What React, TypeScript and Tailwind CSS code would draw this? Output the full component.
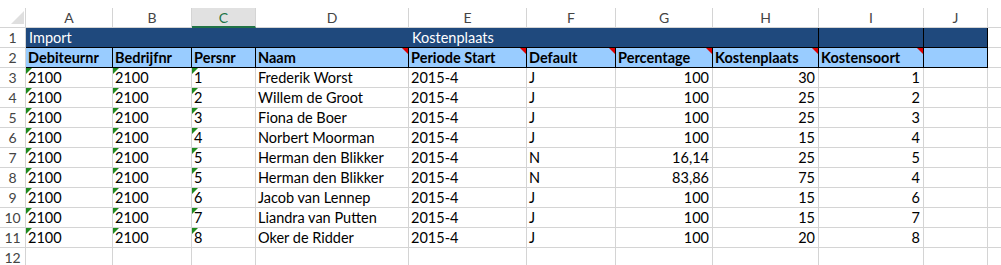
import React from "react";

// column widths in px, gridline included (right edge)
const cols = [
  { key: "A", w: 87 },
  { key: "B", w: 79 },
  { key: "C", w: 64 },
  { key: "D", w: 153 },
  { key: "E", w: 118 },
  { key: "F", w: 89 },
  { key: "G", w: 97 },
  { key: "H", w: 106 },
  { key: "I", w: 105 },
  { key: "J", w: 64 },
];

const headers = [
  "Debiteurnr",
  "Bedrijfnr",
  "Persnr",
  "Naam",
  "Periode Start",
  "Default",
  "Percentage",
  "Kostenplaats",
  "Kostensoort",
  "",
];

const data: string[][] = [
  ["2100", "2100", "1", "Frederik Worst", "2015-4", "J", "100", "30", "1"],
  ["2100", "2100", "2", "Willem de Groot", "2015-4", "J", "100", "25", "2"],
  ["2100", "2100", "3", "Fiona de Boer", "2015-4", "J", "100", "25", "3"],
  ["2100", "2100", "4", "Norbert Moorman", "2015-4", "J", "100", "15", "4"],
  ["2100", "2100", "5", "Herman den Blikker", "2015-4", "N", "16,14", "25", "5"],
  ["2100", "2100", "5", "Herman den Blikker", "2015-4", "N", "83,86", "75", "4"],
  ["2100", "2100", "6", "Jacob van Lennep", "2015-4", "J", "100", "15", "6"],
  ["2100", "2100", "7", "Liandra van Putten", "2015-4", "J", "100", "15", "7"],
  ["2100", "2100", "8", "Oker de Ridder", "2015-4", "J", "100", "20", "8"],
];

const rightAligned = [6, 7, 8];
const greenFlag = [0, 1, 2];
const redFlag = [3, 4, 5, 6, 7, 8];

function RowNum({ n }: { n: number | string }) {
  return (
    <div className="w-[26px] shrink-0 h-full border-r border-b border-[#d4d4d4] flex items-center justify-center text-[#444] text-[14px]">
      {n}
    </div>
  );
}

export default function App() {
  return (
    <div
      className="w-[1001px] h-[265px] overflow-hidden bg-white text-black"
      style={{ fontFamily: "Lato, 'Liberation Sans', sans-serif" }}
    >
      <div className="h-[8px]" />

      {/* column letters */}
      <div className="flex h-[20px]">
        <div className="w-[26px] shrink-0 h-full border-r border-b border-[#d4d4d4] relative">
          <svg className="absolute left-[11px] top-[3px]" width="13" height="13" viewBox="0 0 13 13">
            <polygon points="13,0 13,13 0,13" fill="#dfdfdf" />
          </svg>
        </div>
        {cols.map((c) =>
          c.key === "C" ? (
            <div
              key={c.key}
              style={{ width: c.w }}
              className="shrink-0 h-full bg-[#e1e1e1] border-r border-[#d4d4d4] border-b-2 border-b-[#217346] flex items-center justify-center text-[#217346] text-[14px]"
            >
              {c.key}
            </div>
          ) : (
            <div
              key={c.key}
              style={{ width: c.w }}
              className="shrink-0 h-full border-r border-b border-[#d4d4d4] flex items-center justify-center text-[#444] text-[14px]"
            >
              {c.key}
            </div>
          )
        )}
        <div className="flex-1 h-full border-b border-[#d4d4d4]" />
      </div>

      {/* row 1 - group titles */}
      <div className="flex h-[20px]">
        <RowNum n={1} />
        <div className="w-[383px] shrink-0 h-full bg-[#1f497d] border-b border-black text-white text-[14.5px] leading-[19px] pl-[3px]">
          Import
        </div>
        <div className="w-[410px] shrink-0 h-full bg-[#1f497d] border-r border-b border-black text-white text-[14.5px] leading-[19px] pl-[3px]">
          Kostenplaats
        </div>
        <div className="w-[105px] shrink-0 h-full bg-[#1f497d] border-r border-b border-black" />
        <div className="w-[64px] shrink-0 h-full bg-[#1f497d] border-r border-b border-black" />
        <div className="flex-1 h-full border-b border-[#d4d4d4]" />
      </div>

      {/* row 2 - column headers */}
      <div className="flex h-[20px]">
        <RowNum n={2} />
        {cols.map((c, i) => (
          <div
            key={c.key}
            style={{ width: c.w }}
            className="shrink-0 h-full bg-[#99ccff] border-r border-b border-black relative font-bold text-[14.5px] leading-[19px] pl-[2px] whitespace-nowrap overflow-hidden"
          >
            {headers[i]}
            {redFlag.includes(i) && (
              <svg className="absolute right-0 top-0" width="6" height="6" viewBox="0 0 6 6">
                <polygon points="0,0 6,0 6,6" fill="#e00000" />
              </svg>
            )}
          </div>
        ))}
        <div className="flex-1 h-full border-b border-[#d4d4d4]" />
      </div>

      {/* data rows */}
      {data.map((row, r) => (
        <div key={r} className="flex h-[20px]">
          <RowNum n={r + 3} />
          {cols.map((c, i) => (
            <div
              key={c.key}
              style={{ width: c.w }}
              className={
                "shrink-0 h-full border-r border-b border-[#d4d4d4] relative text-[14.5px] leading-[19px] whitespace-nowrap " +
                (rightAligned.includes(i) ? "text-right pr-[3px]" : "pl-[2px]")
              }
            >
              {row[i] ?? ""}
              {greenFlag.includes(i) && (
                <svg className="absolute left-0 top-0" width="6" height="6" viewBox="0 0 6 6">
                  <polygon points="0,0 6,0 0,6" fill="#1e8a1e" />
                </svg>
              )}
            </div>
          ))}
          <div className="flex-1 h-full border-b border-[#d4d4d4]" />
        </div>
      ))}

      {/* row 12 - empty */}
      <div className="flex h-[20px]">
        <RowNum n={12} />
        {cols.map((c) => (
          <div key={c.key} style={{ width: c.w }} className="shrink-0 h-full border-r border-b border-[#d4d4d4]" />
        ))}
        <div className="flex-1 h-full border-b border-[#d4d4d4]" />
      </div>
    </div>
  );
}
